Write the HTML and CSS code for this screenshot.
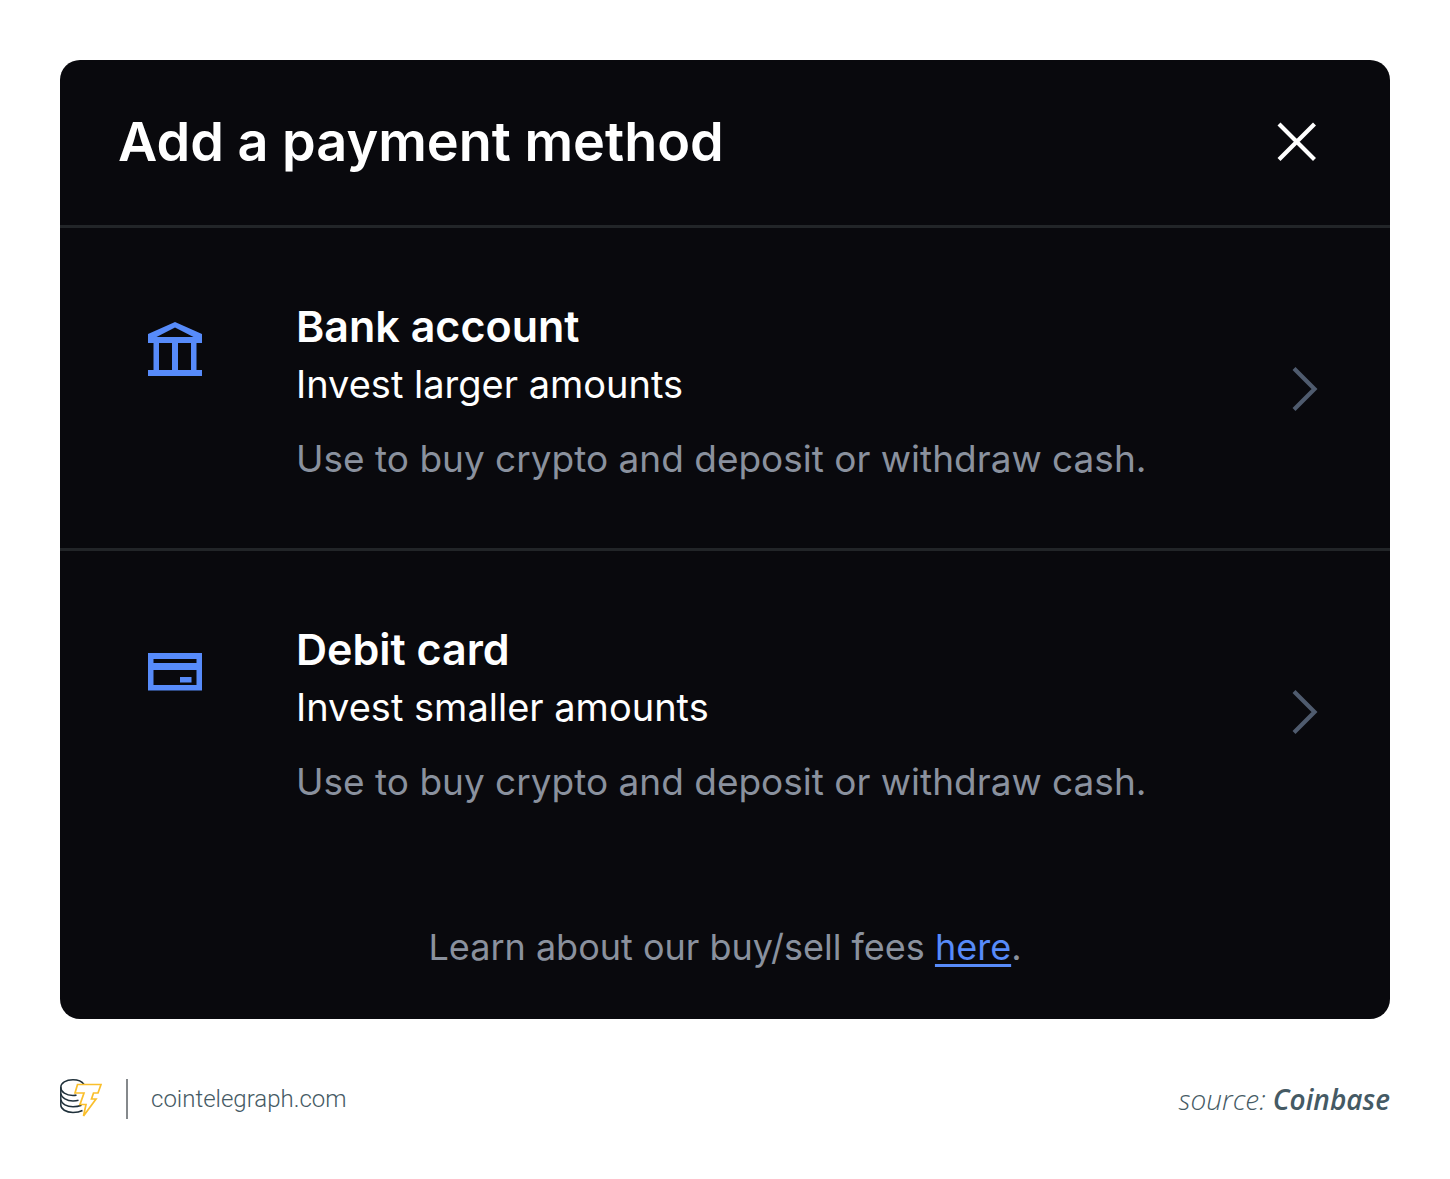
FILE: index.html
```html
<!DOCTYPE html>
<html lang="en">
<head>
<meta charset="utf-8">
<meta name="viewport" content="width=device-width, initial-scale=1">
<title>Add a payment method</title>
<link rel="stylesheet" href="styles.css">
</head>
<body>
<main class="card">
  <header class="card-header">
    <h1 class="card-title">Add a payment method</h1>
    <button class="close" type="button" aria-label="Close">
      <svg width="40" height="40" viewBox="0 0 40 40" aria-hidden="true"><path d="M2 2 37.500 37.500M37.500 2 2 37.500" fill="none" stroke="currentColor" stroke-width="4.200"/></svg>
    </button>
  </header>
  <button class="method" type="button">
    <svg class="method-icon" width="54" height="56" viewBox="0 0 54 56" aria-hidden="true"><path fill="currentColor" fill-rule="evenodd" d="M27 1 54 13V22H48.500V49H54V55H0V49H5.500V22H0V13ZM27 6.500 8.500 16H45.500ZM11 22V49H24V22ZM30 22V49H43V22Z"/></svg>
    <span class="method-text">
      <span class="method-name">Bank account</span>
      <span class="method-summary">Invest larger amounts</span>
      <span class="method-detail">Use to buy crypto and deposit or withdraw cash.</span>
    </span>
    <svg class="chevron" width="28" height="44" viewBox="0 0 28 44" aria-hidden="true"><path d="M3 1.500 23.500 22 3 42.500" fill="none" stroke="currentColor" stroke-width="4.200"/></svg>
  </button>
  <button class="method" type="button">
    <svg class="method-icon" width="54" height="56" viewBox="0 0 54 56" aria-hidden="true"><path fill="currentColor" fill-rule="evenodd" d="M0 9H54V46.500H0ZM5.500 15V19H48.500V15ZM5.500 26V41H48.500V26ZM32 33H43.500V38.500H32Z"/></svg>
    <span class="method-text">
      <span class="method-name">Debit card</span>
      <span class="method-summary">Invest smaller amounts</span>
      <span class="method-detail">Use to buy crypto and deposit or withdraw cash.</span>
    </span>
    <svg class="chevron" width="28" height="44" viewBox="0 0 28 44" aria-hidden="true"><path d="M3 1.500 23.500 22 3 42.500" fill="none" stroke="currentColor" stroke-width="4.200"/></svg>
  </button>
  <p class="fees">Learn about our buy/sell fees <a href="#fees">here</a>.</p>
</main>
<footer class="footer">
  <svg class="logo" width="42" height="40" viewBox="0 0 42 40" aria-hidden="true">
    <g fill="none" stroke="#1f303a" stroke-width="1.500">
      <path d="M24 5.500C22 2.500 18 .8 13 .8 6 .8 .8 4 .8 8.500S6 16.500 13 16.500C14.500 16.500 15.500 16.400 16.500 16"/>
      <path d="M.8 8V26C.8 30 6 33.500 13 33.500 17 33.500 20 32.800 22.500 31.500"/>
      <path d="M.8 14.500C1.500 19 7 22 13 22 15 22 17 21.800 18.500 21.300"/>
      <path d="M.8 20.500C1.500 25 7 27.700 13 27.700 16 27.700 19 27.200 21.500 26.200"/>
    </g>
    <path d="M17.500 5.500H41L38 14H33.500L31.500 20H36L23.500 37 26 25.500H20L24 14H15Z" fill="none" stroke="#fabf2c" stroke-width="1.700"/>
  </svg>
  <a class="site" href="#site">cointelegraph.com</a>
  <p class="source">source: <strong>Coinbase</strong></p>
</footer>
</body>
</html>
```
FILE: styles.css
```css
* { box-sizing: border-box; }

body {
  margin: 0;
  padding: 60px;
  background: #fff;
  font-family: Inter, "Noto Sans", sans-serif;
}

h1, p { margin: 0; }

button {
  margin: 0;
  border: 0;
  background: none;
  font: inherit;
  cursor: pointer;
}

.card {
  overflow: hidden;
  border-radius: 20px;
  background: #09090d;
  color: #fff;
}

.card-header {
  display: flex;
  align-items: center;
  justify-content: space-between;
  padding: 50px 73px 51px 58px;
  border-bottom: 3px solid #222528;
}

.card-title {
  font-size: 54px;
  font-weight: 600;
  line-height: 64px;
}

.close {
  display: flex;
  padding: 0;
  color: #fff;
}

.method {
  display: flex;
  align-items: center;
  width: 100%;
  padding: 68px 71px 67px 88px;
  color: #fff;
  text-align: left;
}

.method + .method { border-top: 3px solid #222528; }

.method-icon {
  flex: none;
  align-self: flex-start;
  margin-top: 25px;
  color: #578bfa;
}

.method-text {
  display: flex;
  flex: 1;
  flex-direction: column;
  padding-left: 94px;
}

.method-name {
  font-size: 43px;
  font-weight: 600;
  line-height: 60px;
}

.method-summary {
  font-size: 38px;
  line-height: 56px;
}

.method-detail {
  margin-top: 25px;
  color: #8a919e;
  font-size: 37px;
  line-height: 44px;
}

.chevron {
  flex: none;
  color: #4f5b6e;
}

.fees {
  padding: 54px 60px 50px;
  color: #8a919e;
  font-size: 36px;
  line-height: 44px;
  text-align: center;
}

.fees a {
  color: #578bfa;
  text-decoration-thickness: 3px;
  text-underline-offset: 4px;
}

.footer {
  display: flex;
  align-items: center;
  padding-top: 60px;
}

.logo { flex: none; }

.site {
  margin-left: 24px;
  padding-left: 23px;
  border-left: 2px solid #85898c;
  color: #455a64;
  font-family: Roboto, sans-serif;
  font-size: 24px;
  font-weight: 300;
  line-height: 40px;
  text-decoration: none;
}

.source {
  margin-left: auto;
  color: #455a64;
  font-family: "Open Sans", sans-serif;
  font-size: 28px;
  font-style: italic;
  font-weight: 300;
  line-height: 38px;
}

.source strong { font-weight: 600; }
```
